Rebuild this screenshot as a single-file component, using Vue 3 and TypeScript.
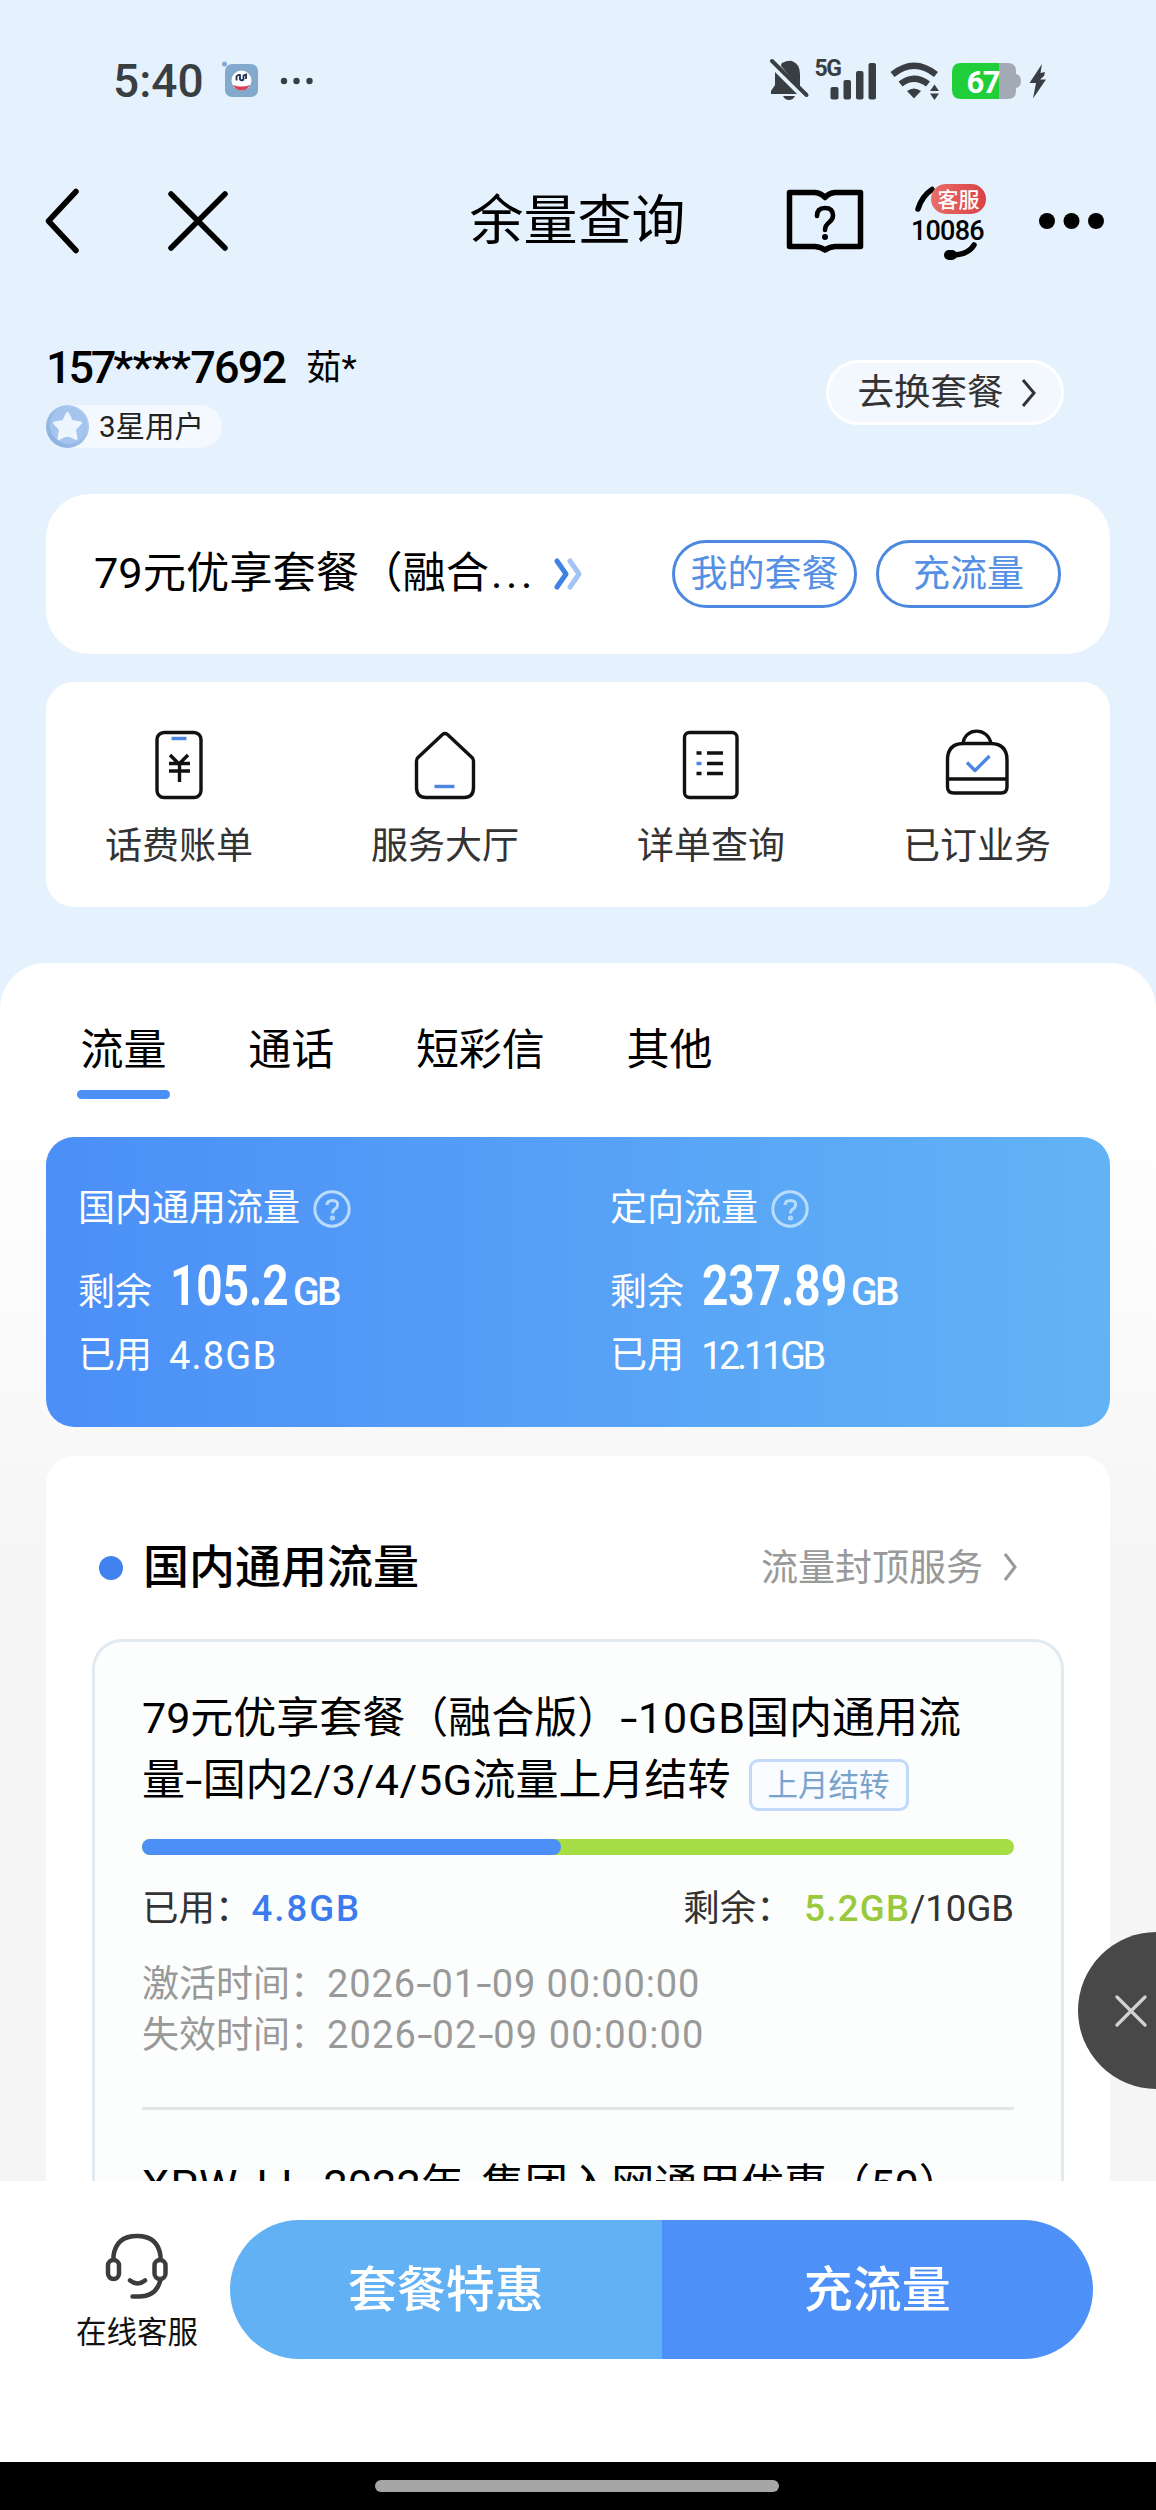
<script setup lang="ts">
interface Summary {
  title: string
  left: string
  leftClass: string
  used: string
  usedClass: string
}

const shortcuts: { id: string; label: string }[] = [
  { id: 'bill', label: '话费账单' },
  { id: 'hall', label: '服务大厅' },
  { id: 'detail', label: '详单查询' },
  { id: 'ordered', label: '已订业务' },
]

const tabs: string[] = ['流量', '通话', '短彩信', '其他']
const activeTab = '流量'

const summaries: Summary[] = [
  { title: '国内通用流量', left: '105.2', leftClass: 'w-short', used: '4.8GB', usedClass: 'loose' },
  { title: '定向流量', left: '237.89', leftClass: 'w-long', used: '12.11GB', usedClass: 'tight' },
]

const usedPercent = 48
</script>

<template>
  <div class="screen">
    <header class="status">
      <span class="time">5:40</span>
      <svg class="app-icon" width="37" height="40" viewBox="0 0 37 40">
        <circle cx="2.5" cy="3" r="2.5" fill="#7fa9d6" />
        <rect x="3" y="3" width="33" height="33" rx="7" fill="#83a9cd" />
        <circle cx="19.500" cy="19.500" r="10" fill="#fff" />
        <path d="M11 24q8.500 3 17 0-3 5.500-8.500 5.500T11 24z" fill="#d9435a" />
        <path d="M14.500 19.500V15.500Q16 13.500 18 14V18.500Q20 20 21.500 18.500V14.500L24 13.500V18" fill="none" stroke="#1d2f55" stroke-width="1.800" />
      </svg>
      <svg class="more-small" width="34" height="8" viewBox="0 0 34 8">
        <circle cx="4" cy="4" r="3.200" /><circle cx="16.500" cy="4" r="3.200" /><circle cx="29.500" cy="4" r="3.200" />
      </svg>
      <svg class="status-icons" width="280" height="66" viewBox="768 48 280 66">
        <g fill="#393e43">
          <path d="M782 63Q788 60 792 61Q800 64 800 74V88L781 66Q781 64 782 63Z" />
          <path d="M775 72L797 94H771V91L775 85Z" />
          <path d="M783 96H795Q793 100 789 100T783 96Z" />
          <path d="M772 61L806.500 95" fill="none" stroke="#393e43" stroke-width="4" stroke-linecap="round" />
          <rect x="830.500" y="87" width="8" height="12.500" rx="2" />
          <rect x="843.500" y="80" width="7.500" height="19.500" rx="2" />
          <rect x="856" y="71" width="7.500" height="28.500" rx="2" />
          <rect x="868.500" y="63" width="7.500" height="36.500" rx="2" />
          <path d="M892.500 74.500Q914 57 936 74.500" fill="none" stroke="#393e43" stroke-width="6.500" />
          <path d="M900.500 84Q914 73.500 928 84" fill="none" stroke="#393e43" stroke-width="6.500" />
          <path d="M907 91Q914 86 921 91L914 98.500Z" />
          <path d="M930 91L934.500 84.500L939 91ZM930 93.500H939L934.500 100Z" />
          <path d="M1042 64L1029.500 83H1036L1033 98.500L1046 79.500H1040L1044 76L1045 72L1040.500 73Z" />
        </g>
        <text class="net" x="814.500" y="75.500">5G</text>
        <path d="M998 63h10q8 0 8 8v20q0 8-8 8h-10z" fill="#a2abb5" />
        <path d="M1016 74q5 1 5 7t-5 7z" fill="#a2abb5" />
        <path d="M961 63h38v36h-38q-9 0-9-9V72q0-9 9-9z" fill="#1fce38" />
        <text class="battery" x="966.500" y="92.500">67</text>
      </svg>
    </header>

    <nav class="nav">
      <div class="nav-left">
        <svg width="34" height="66" viewBox="0 0 34 66" class="nav-line">
          <path d="M31 3.500L3.500 33L31 62.500" />
        </svg>
        <svg width="60" height="60" viewBox="0 0 60 60" class="nav-line close">
          <path d="M3 3L57 57M57 3L3 57" />
        </svg>
      </div>
      <h1>余量查询</h1>
      <div class="nav-right">
        <svg width="78" height="66" viewBox="0 0 78 66" class="book">
          <path d="M3.500 4.500H29Q35 5 39 9.500Q43 5 49 4.500H74.500V58.500H49Q43 59 39 62Q35 59 29 58.500H3.500Z" />
          <path d="M31 28Q31 20 39 20T47 27.500Q47 31 43.500 34Q39 37.500 39 42" class="mark" />
          <circle cx="39" cy="49" r="3" class="solid" />
        </svg>
        <svg width="76" height="80" viewBox="911 180 76 80" class="service">
          <defs>
            <linearGradient id="badge-red" x1="0" x2="1" y1="0" y2="0">
              <stop offset="0" stop-color="#ea6d68" /><stop offset="1" stop-color="#d94146" />
            </linearGradient>
          </defs>
          <path d="M918 208Q922 195 932 188.500" class="arc" />
          <rect x="931" y="183" width="55" height="30" rx="15" fill="url(#badge-red)" />
          <text x="937.500" y="205.500" class="tag-text">客服</text>
          <text x="911" y="239" class="hotline">10086</text>
          <path d="M974 244Q969 253 954 254" class="arc" />
          <rect x="944" y="249" width="13" height="10" rx="5" />
        </svg>
        <svg width="68" height="18" viewBox="0 0 68 18" class="more">
          <circle cx="9" cy="9" r="8" /><circle cx="33.500" cy="9" r="8" /><circle cx="58" cy="9" r="8" />
        </svg>
      </div>
    </nav>

    <section class="user">
      <div>
        <div class="identity">
          <span class="phone"><span class="head">157</span><span class="mask">****</span>7692</span><span class="name">茹*</span>
        </div>
        <div class="level">
          <svg width="44" height="43" viewBox="0 0 44 43">
            <defs>
              <linearGradient id="medal" x1="0" x2="1" y1="1" y2="0">
                <stop offset="0" stop-color="#86abdc" /><stop offset="1" stop-color="#b5d1f6" />
              </linearGradient>
            </defs>
            <circle cx="21.500" cy="21.500" r="21.500" fill="url(#medal)" />
            <circle cx="22.500" cy="20.500" r="18.500" fill="#a5c5ee" />
            <path d="M21.500 8.500L25.500 16.500L34.500 18L28.500 24.500L30 33.500L21.500 29.500L13 33.500L14.500 24.500L8.500 18L17.500 16.500Z" fill="#edf5fe" stroke="#edf5fe" stroke-width="3" stroke-linejoin="round" />
          </svg>
          <span>3星用户</span>
        </div>
      </div>
      <button class="change"><span>去换套餐</span>
        <svg width="16" height="30" viewBox="0 0 16 30"><path d="M2 2L13 15L2 28" /></svg>
      </button>
    </section>

    <section class="plan">
      <span class="plan-name">79元优享套餐（融合<span class="dots">...</span></span>
      <svg width="32" height="32" viewBox="0 0 32 32" class="double">
        <path d="M4 3L13 16L4 29" stroke="#3f82e4" />
        <path d="M17 3L26 16L17 29" stroke="#a3c4f5" />
      </svg>
      <button>我的套餐</button>
      <button>充流量</button>
    </section>

    <section class="shortcuts">
      <div v-for="item in shortcuts" :key="item.id" class="shortcut">
        <svg width="72" height="74" viewBox="0 0 72 74">
          <template v-if="item.id === 'bill'">
            <rect x="14" y="4.500" width="44" height="65" rx="7" />
            <path d="M28.500 10.500H43.500" class="blue" />
            <path d="M27 27L36 36L45 27M26 35.500H47M26 43H47M36.500 35V54" />
          </template>
          <template v-else-if="item.id === 'hall'">
            <path d="M33.500 6.500Q36 4.500 38.500 6.500L63 29.500Q64.500 31 64.500 33V59.500Q64.500 69.500 55 69.500H17Q7.500 69.500 7.500 59.500V33Q7.500 31 9 29.500Z" />
            <path d="M25.500 58.500H45.500" class="blue" />
          </template>
          <template v-else-if="item.id === 'detail'">
            <rect x="9.500" y="4.500" width="52.500" height="65" rx="5" />
            <path d="M32 25H48M32 35.500H48M32 45.500H48" />
            <path d="M21.500 25H26.500M21.500 45.500H26.500" />
            <path d="M21.500 35.500H26.500" class="blue" />
          </template>
          <template v-else>
            <path d="M22 15.500C24 -1 47 -1 50 15.500" />
            <path d="M22 15.500H50Q66 16 66 32V59Q66 65 60 65H13Q6.500 65 6.500 59V32Q6.500 16 22 15.500ZM6.500 51H66" />
            <path d="M26 34.500L34 42.500L48.500 28" class="blue" />
          </template>
        </svg>
        <span>{{ item.label }}</span>
      </div>
    </section>

    <main class="panel">
      <div class="tabs">
        <span v-for="tab in tabs" :key="tab" class="tab" :class="{ active: tab === activeTab }">{{ tab }}</span>
      </div>

      <section class="summary">
        <div v-for="s in summaries" :key="s.title" class="col">
          <div class="s-title">{{ s.title }}
            <svg width="38" height="38" viewBox="0 0 38 38">
              <circle cx="19" cy="19" r="17.200" />
              <path d="M14 15Q14 10.500 19.500 10.500T24.500 15Q24.500 17.500 22 19Q19.500 20.500 19.500 23.500" />
              <circle cx="19.500" cy="28" r="1" />
            </svg>
          </div>
          <div class="s-left"><span>剩余</span><b :class="s.leftClass"><i>{{ s.left }}</i></b><em>GB</em></div>
          <div class="s-used"><span>已用</span><q :class="s.usedClass">{{ s.used }}</q></div>
        </div>
      </section>

      <section class="card">
        <div class="card-head">
          <i class="dot"></i>
          <h2>国内通用流量</h2>
          <span class="cap"><span>流量封顶服务</span>
            <svg width="16" height="30" viewBox="0 0 16 30"><path d="M2 2L12 15L2 28" /></svg>
          </span>
        </div>
        <div class="box">
          <div class="line"><span>79元优享套餐（融合版）<i class="hy">-</i><span class="wide-a">10GB</span>国内通用流</span></div>
          <div class="line"><span>量<i class="hy">-</i>国内<span class="wide-b">2/3/4/5G</span>流量上月结转</span><span class="tag">上月结转</span></div>
          <div class="bar"><div class="bar-used" :style="{ width: usedPercent + '%' }"></div></div>
          <div class="usage">
            <span>已用：<strong class="used">4.8GB</strong></span>
            <span class="rest"><span class="rest-label">剩余：</span><strong class="remain">5.2GB</strong>/10GB</span>
          </div>
          <div class="dates">
            <div><span>激活时间：</span><time class="d1">2026<i class="hy">-</i>01<i class="hy">-</i>09 00:00:00</time></div>
            <div><span>失效时间：</span><time class="d2">2026<i class="hy">-</i>02<i class="hy">-</i>09 00:00:00</time></div>
          </div>
          <div class="rule"></div>
          <div class="next"><span class="wide-c">XPW</span><i class="hy">-</i><span class="wide-c">LL</span><i class="hy">-</i>2022年<i class="hy">-</i>集团入网通用优惠（50）</div>
        </div>
      </section>
    </main>

    <footer class="bottom">
      <div class="online">
        <svg width="66" height="68" viewBox="0 0 66 68">
          <path d="M9.500 26V24Q12 4 33 4T56.500 24V27" />
          <rect x="4" y="28" width="11" height="19" rx="5.500" />
          <rect x="50.500" y="28" width="11" height="19" rx="5.500" />
          <path d="M26 48.500Q33.500 54.500 41 48.500" />
          <path d="M56.500 48Q52 65.500 33 64.500H28.500" />
        </svg>
        <span>在线客服</span>
      </div>
      <div class="actions">
        <button class="light">套餐特惠</button>
        <button class="deep">充流量</button>
      </div>
    </footer>
    <div class="gesture"><i></i></div>

    <div class="float-close">
      <svg width="32" height="32" viewBox="0 0 32 32"><path d="M2 2L30 30M30 2L2 30" /></svg>
    </div>
  </div>
</template>

<style>
body { margin: 0; }
</style>

<style scoped>
.screen {
  position: relative;
  display: flex;
  flex-direction: column;
  width: 1156px;
  height: 2510px;
  overflow: hidden;
  background: #e5f2fe;
  color: #000;
  font-family: Roboto, 'Noto Sans CJK SC', sans-serif;
  line-height: 1.2;
  white-space: nowrap;
}
svg { display: block; flex: none; }
button {
  font-family: inherit;
  line-height: 1.2;
  padding: 0;
  border: 0;
  box-sizing: border-box;
}
h1, h2 { margin: 0; }

.status { display: flex; align-items: center; height: 162px; padding-left: 113px; }
.time { width: 109px; padding-top: 1px; font-size: 46px; font-weight: 500; color: #393e43; }
.more-small { margin-left: 21px; fill: #393e43; }
.status-icons { margin-left: 454px; }
.net { font-size: 23px; font-weight: 700; fill: #393e43; letter-spacing: -1.5px; }
.battery { font-size: 31px; font-weight: 700; fill: #fff; letter-spacing: -1.5px; }

.nav { display: grid; grid-template-columns: 1fr auto 1fr; align-items: center; height: 117px; }
.nav-left, .nav-right { display: flex; align-items: center; }
.nav-left { padding-left: 45px; }
.nav-right { justify-content: flex-end; padding-right: 50px; }
.nav-line { fill: none; stroke: #000; stroke-width: 5.5; stroke-linecap: round; stroke-linejoin: round; }
.close { margin-left: 89px; }
h1 { padding: 3px 1px 0 0; font-size: 54px; font-weight: 400; line-height: 80px; }
.book { margin-right: 47px; fill: none; stroke: #000; stroke-width: 5.5; stroke-linejoin: round; stroke-linecap: round; }
.book .mark { stroke-width: 4.6; }
.book .solid { fill: #000; stroke: none; }
.service { margin-right: 51px; }
.arc { fill: none; stroke: #000; stroke-width: 5.5; stroke-linecap: round; }
.tag-text { font-size: 21px; font-weight: 500; fill: #fff; }
.hotline { font-size: 27px; font-weight: 500; letter-spacing: -.8px; }

.user { display: flex; justify-content: space-between; align-items: flex-start; height: 152px; padding: 63px 92px 0 46px; }
.identity { display: flex; height: 50px; line-height: 52px; margin-bottom: 13px; }
.phone { width: 260px; font-size: 45px; font-weight: 500; letter-spacing: -1.8px; }
.head { letter-spacing: -3.2px; }
.mask { letter-spacing: -.7px; }
.name { font-size: 35.500px; }
.level { display: flex; align-items: center; width: 176px; height: 43px; border-radius: 22px; background: #f4f9ff; font-size: 29.500px; color: #222; }
.level span { margin-left: 9px; padding-top: 2px; }
.change {
  display: flex; align-items: center; justify-content: center; gap: 17px;
  width: 238px; height: 65px; margin-top: 18px; padding-left: 4px;
  border: 3px solid #fff; border-radius: 33px; background: #f3f8fe;
  font-size: 36.500px; color: #333;
}
.change path { fill: none; stroke: #333; stroke-width: 3; }

.plan {
  display: flex; align-items: center; box-sizing: border-box;
  height: 160px; margin: 0 46px 28px; padding: 0 49px 0 48px;
  border-radius: 44px; background: #fff;
}
.plan-name { width: 459px; font-size: 43.300px; }
.dots { margin-left: 2px; letter-spacing: 3.600px; }
.double { margin-right: 87px; fill: none; stroke-width: 5; stroke-linecap: round; stroke-linejoin: round; }
.plan button {
  width: 185px; height: 68px; padding-top: 2px; border: 3px solid #4d88e0; border-radius: 34px;
  background: #fff; color: #5590e4; font-size: 37px;
}
.plan button + button { margin-left: 19px; }

.shortcuts { display: flex; height: 225px; margin: 0 46px 56px; border-radius: 28px; background: #fff; }
.shortcut { display: flex; flex: 1; flex-direction: column; align-items: center; padding-top: 46px; font-size: 37px; line-height: 50px; color: #333; }
.shortcut svg { margin-bottom: 20px; }
.shortcut path, .shortcut rect { fill: none; stroke: #111; stroke-width: 3.4; stroke-linejoin: round; }
.shortcut .blue { stroke: #4b86e0; }

.panel {
  height: 1218px; overflow: hidden; border-radius: 46px 46px 0 0;
  background: linear-gradient(#fff 150px, #f5f5f5 620px);
}
.tabs { display: flex; gap: 81.700px; height: 136px; margin-bottom: 38px; padding: 0 80.500px; font-size: 43px; line-height: 60px; }
.tab { position: relative; padding-top: 57px; }
.active::after {
  content: ''; position: absolute; left: -3.500px; right: -3.500px; bottom: 0;
  height: 9px; border-radius: 5px; background: #4b8ff7;
}

.summary {
  display: flex; box-sizing: border-box; height: 290px; margin: 0 46px 29px; padding: 48px 0 0 32px;
  border-radius: 28px; background: linear-gradient(90deg, #4b8ff7, #62b3f6); color: #fff;
}
.col { flex: none; width: 532px; }
.s-title { display: flex; align-items: center; gap: 13px; height: 48px; font-size: 37px; }
.s-title svg { fill: none; stroke: #b9dcfd; stroke-width: 3; }
.s-left { display: flex; height: 80px; margin-top: 13px; font-size: 37px; }
.s-left span { width: 92px; line-height: 93px; }
.s-left b { display: block; height: 80px; line-height: 80px; font-size: 56px; }
.s-left i { display: block; font-style: normal; transform-origin: 0 50%; transform: scaleX(.82); }
.w-short { width: 123px; }
.w-long { width: 149px; }
.s-left em { font-style: normal; font-size: 39px; font-weight: 500; line-height: 92px; letter-spacing: -2.5px; }
.s-used { display: flex; height: 48px; margin-top: 6px; line-height: 48px; font-size: 37px; }
.s-used span { width: 91px; }
.s-used q { quotes: none; font-size: 38px; }
.loose { letter-spacing: 1.2px; }
.tight { letter-spacing: -3.3px; }

.card { height: 820px; margin: 0 46px; border-radius: 28px; background: #fff; }
.card-head { display: flex; align-items: center; height: 183px; padding: 40px 46px 0 53px; box-sizing: border-box; }
.dot { width: 24px; height: 24px; margin-right: 20px; border-radius: 50%; background: #4083ee; }
h2 { flex: 1; font-size: 46px; font-weight: 500; }
.cap { display: flex; align-items: center; gap: 20px; margin-right: 45px; font-size: 37px; color: #999; }
.cap span { padding-top: 3px; }
.cap path { fill: none; stroke: #999; stroke-width: 3; }
.box {
  box-sizing: border-box; height: 637px; margin: 0 46px; padding: 45px 47px 0;
  border: 3px solid #e1e9f1; border-bottom-width: 0; border-radius: 30px 30px 0 0; background: #fcfefd;
}
.hy { display: inline-block; width: .41em; font-style: normal; text-align: center; letter-spacing: 0; transform: scaleX(1.45); }
.wide-a { letter-spacing: .9px; }
.wide-b { letter-spacing: .6px; }
.wide-c { letter-spacing: 1.4px; }
.line { display: flex; align-items: center; height: 62px; line-height: 62px; font-size: 43px; }
.tag {
  box-sizing: border-box; width: 160px; height: 52px; margin: 9px 0 0 18px;
  border: 3px solid #c3d9f8; border-radius: 9px; background: #f8fbff;
  color: #7aa3cb; font-size: 30.500px; line-height: 47px; text-align: center;
}
.bar { height: 16px; margin-top: 28px; border-radius: 8px; background: #a6dd45; }
.bar-used { height: 16px; border-radius: 8px; background: #4b8ff7; }
.usage { display: flex; justify-content: space-between; height: 50px; margin-top: 28px; line-height: 51px; font-size: 36.500px; color: #333; }
.usage strong { font-weight: 500; }
.used { color: #3c7bef; letter-spacing: 2px; }
.rest { display: flex; }
.rest-label { width: 121px; }
.remain { color: #99c93c; letter-spacing: 1.3px; }
.dates { margin-top: 26px; font-size: 37px; line-height: 51px; color: #999; }
.dates div { display: flex; }
.dates span { width: 185px; }
.dates time { font-size: 38px; }
.d1 { letter-spacing: .9px; }
.d2 { letter-spacing: 1.15px; }
.rule { height: 3px; margin-top: 46px; background: #e3e5e6; }
.next { margin-top: 45px; line-height: 62px; font-size: 43.200px; }

.bottom { position: relative; display: flex; height: 281px; background: #fff; }
.online { display: flex; flex-direction: column; align-items: center; width: 122px; margin-left: 76px; padding-top: 51px; font-size: 30.500px; line-height: 40px; color: #111; }
.online svg { margin-bottom: 13px; fill: none; stroke: #3c3c3c; stroke-width: 4.500; stroke-linecap: round; }
.actions { display: flex; width: 863px; height: 139px; margin: 39px 0 0 32px; border-radius: 70px; overflow: hidden; }
.actions button { width: 431.500px; padding-top: 4px; color: #fff; font-size: 49px; font-weight: 500; }
.light { background: #62b1f4; }
.deep { background: #4c90f8; }
.gesture { display: flex; justify-content: center; height: 48px; padding: 18px 2px 0 0; box-sizing: border-box; background: #000; }
.gesture i { width: 404px; height: 12px; border-radius: 6px; background: #a6a6a6; }

.float-close {
  position: absolute; left: 1078px; top: 1932px; display: flex; align-items: center;
  width: 157px; height: 157px; box-sizing: border-box; padding-left: 37px;
  border-radius: 50%; background: #484848;
}
.float-close path { fill: none; stroke: #d2d2d2; stroke-width: 3.200; stroke-linecap: round; }
</style>
